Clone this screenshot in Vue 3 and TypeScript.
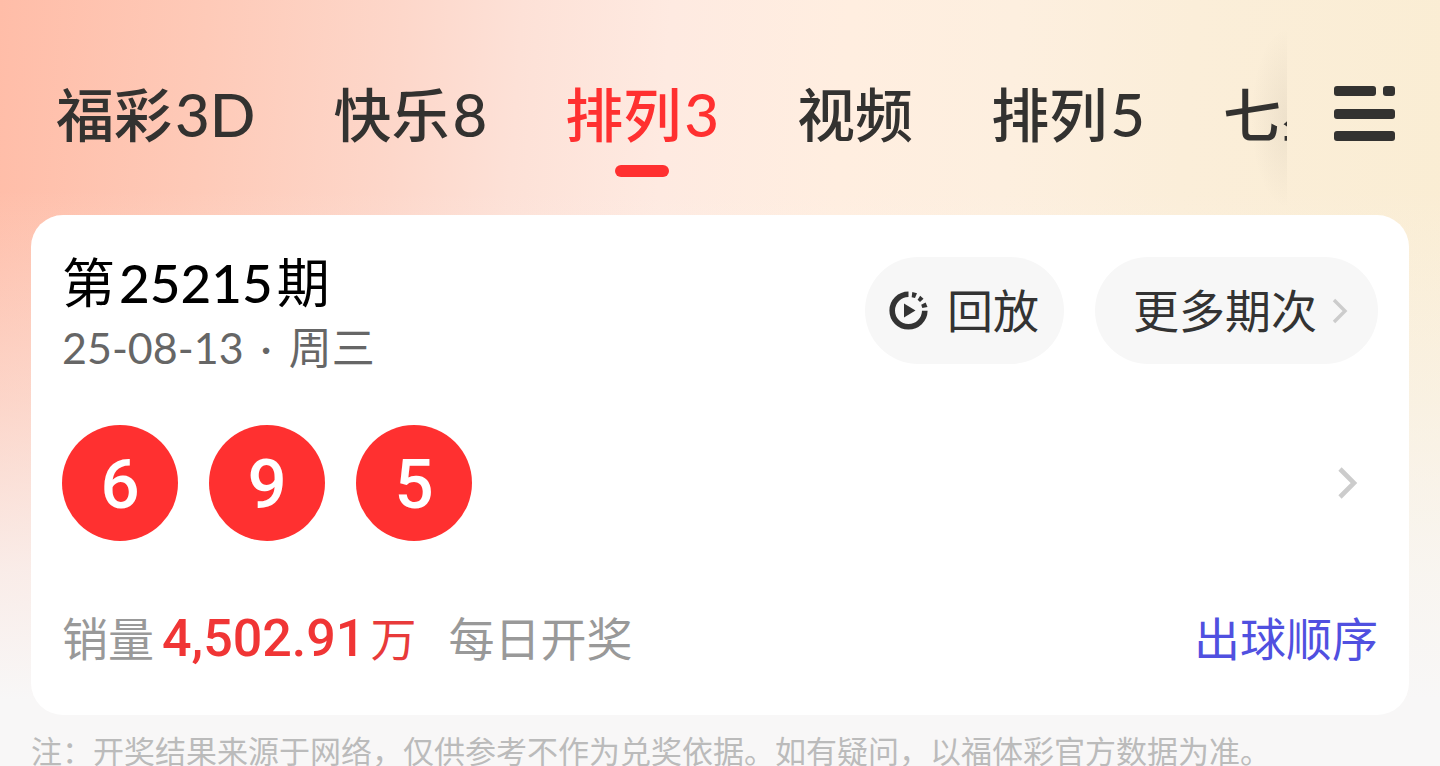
<script setup lang="ts">
import { ref } from 'vue'

interface Tab {
  name: string
  suffix: string
}

const tabs: Tab[] = [
  { name: '福彩', suffix: '3D' },
  { name: '快乐', suffix: '8' },
  { name: '排列', suffix: '3' },
  { name: '视频', suffix: '' },
  { name: '排列', suffix: '5' },
  { name: '七星彩', suffix: '' },
]
const active = ref<number>(2)
const balls: number[] = [6, 9, 5]
</script>

<template>
  <main class="page">
    <header class="top">
      <nav class="tabs" aria-label="彩种">
        <button
          v-for="(tab, index) in tabs"
          :key="index"
          type="button"
          class="tab"
          :class="{ active: index === active }"
          @click="active = index"
        >{{ tab.name }}<span v-if="tab.suffix" class="suffix">{{ tab.suffix }}</span></button>
      </nav>
      <button type="button" class="menu" aria-label="全部彩种">
        <svg width="62" height="58" viewBox="0 0 62 58" fill="#333230">
          <rect x="0" y="1" width="42" height="10" rx="3" />
          <rect x="49" y="1" width="12" height="10" rx="3" />
          <rect x="0" y="24" width="61" height="10" rx="3" />
          <rect x="0" y="46" width="61" height="10" rx="3" />
        </svg>
      </button>
    </header>

    <section class="card">
      <div class="head">
        <div>
          <h1 class="issue">第<span class="number">25215</span>期</h1>
          <p class="date">25-08-13<span class="dot"> · </span>周三</p>
        </div>
        <div class="actions">
          <button type="button" class="pill replay">
            <svg width="40" height="40" viewBox="0 0 40 40">
              <path d="M19.500 3.200A16.300 16.300 0 1 0 35.800 19.800" fill="none" stroke="#333" stroke-width="5.6" />
              <g fill="#333">
                <path d="M23.300 1L28 2.200L26 7L22.700 6.200Z" />
                <path d="M31.200 4.700L34.500 7.800L31 11L28.600 8.700Z" />
                <path d="M36.600 11.500L38.500 16L33.300 17L32.200 13.700Z" />
                <path d="M15 12.500V26.500L26.500 19.500Z" />
              </g>
            </svg>
            <span class="label">回放</span>
          </button>
          <button type="button" class="pill more">
            <span class="label">更多期次</span>
            <svg width="16" height="26" viewBox="0 0 16 26" fill="none" stroke="#ccc" stroke-width="3.4">
              <path d="M2 2L13 13L2 24" />
            </svg>
          </button>
        </div>
      </div>

      <a href="#detail" class="result" aria-label="开奖详情">
        <span v-for="ball in balls" :key="ball" class="ball">{{ ball }}</span>
        <svg class="chevron" width="20" height="32" viewBox="0 0 20 32" fill="none" stroke="#ccc" stroke-width="4.600">
          <path d="M2 2L16 16L2 30" />
        </svg>
      </a>

      <div class="foot">
        <span>销量</span>
        <span class="amount">4,502.91</span>
        <span class="unit">万</span>
        <span>每日开奖</span>
        <a href="#order" class="order">出球顺序</a>
      </div>
    </section>

    <p class="note">注：开奖结果来源于网络，仅供参考不作为兑奖依据。如有疑问，以福体彩官方数据为准。</p>
  </main>
</template>

<style>
body {
  margin: 0;
}
</style>

<style scoped>
.page {
  box-sizing: border-box;
  height: 100vh;
  overflow: hidden;
  font-family: Lato, "Noto Sans CJK SC", sans-serif;
  color: #333;
  background:
    linear-gradient(180deg, rgba(248, 247, 247, 0) 190px, rgba(248, 247, 247, 0.4) 400px, rgba(248, 247, 247, 0.8) 570px, #f8f7f7 700px),
    linear-gradient(94deg, #ffbda8 0%, #fecab8 14%, #fdd7ca 27%, #fde1d7 35%, #feeae1 45%, #ffeee0 57%, #fdefdf 68%, #fbeed9 80%, #faedd3 100%);
}

button {
  margin: 0;
  padding: 0;
  border: 0;
  background: none;
  font: inherit;
  color: inherit;
  white-space: nowrap;
  cursor: pointer;
}

a {
  text-decoration: none;
}

.top {
  display: flex;
  height: 215px;
}

.tabs {
  display: flex;
  flex: 1;
  align-items: flex-start;
  gap: 78px;
  min-width: 0;
  padding-left: 56px;
  overflow: hidden;
  background: radial-gradient(36px 90px at 100% 118px, rgba(70, 60, 50, 0.07), rgba(70, 60, 50, 0));
}

.tab {
  position: relative;
  flex: none;
  height: 215px;
  padding-top: 14px;
  font-size: 58px;
  font-weight: 500;
  line-height: 88px;
  color: #333230;
}

.suffix {
  margin-left: 3px;
  font-size: 60px;
}

.tab.active {
  color: #ff3030;
}

.tab.active::after {
  content: "";
  position: absolute;
  top: 165px;
  left: 50%;
  width: 54px;
  height: 12px;
  margin-left: -27px;
  border-radius: 6px;
  background: #ff3030;
}

.menu {
  width: 153px;
  height: 228px;
  padding-left: 2px;
}

.menu svg {
  display: inline-block;
  vertical-align: middle;
}

.card {
  margin: 0 31px;
  padding: 42px 31px;
  border-radius: 32px;
  background: #fff;
}

.head {
  display: flex;
  justify-content: space-between;
}

.issue {
  margin: 0;
  font-size: 53px;
  font-weight: 400;
  line-height: 52px;
  color: #000;
}

.number {
  margin: 0 4px;
  font-weight: 500;
}

.date {
  margin: 11px 0 0;
  font-size: 43px;
  line-height: 56px;
  color: #666;
}

.dot {
  margin: 0 6px;
  white-space: pre;
}

.actions {
  display: flex;
  gap: 31px;
}

.pill {
  display: flex;
  align-items: center;
  height: 107px;
  border-radius: 54px;
  background: #f7f7f7;
  font-size: 46px;
}

.label {
  padding-bottom: 6px;
}

.replay {
  gap: 18px;
  padding: 0 25px 0 24px;
}

.more {
  gap: 15px;
  padding: 0 30px 0 38px;
}

.result {
  display: flex;
  align-items: center;
  gap: 31px;
  margin-top: 49px;
}

.ball {
  width: 116px;
  height: 116px;
  border-radius: 50%;
  background: #ff3030;
  color: #fff;
  font-family: Roboto, sans-serif;
  font-size: 69px;
  font-weight: 500;
  line-height: 120px;
  text-align: center;
}

.chevron {
  margin-left: auto;
  margin-right: 20px;
}

.foot {
  display: flex;
  align-items: center;
  height: 68px;
  margin-top: 64px;
  font-size: 46px;
  line-height: 68px;
  color: #999;
}

.amount {
  margin: 0 5px 0 8px;
  font-family: Roboto, sans-serif;
  font-size: 52px;
  font-weight: 500;
  color: #f03535;
}

.unit {
  margin-right: 32px;
  color: #e83a3a;
}

.order {
  margin-left: auto;
  color: #5050e0;
}

.note {
  margin: 13px 31px 0;
  font-size: 31px;
  line-height: 46px;
  color: #bbb;
  white-space: nowrap;
}
</style>
